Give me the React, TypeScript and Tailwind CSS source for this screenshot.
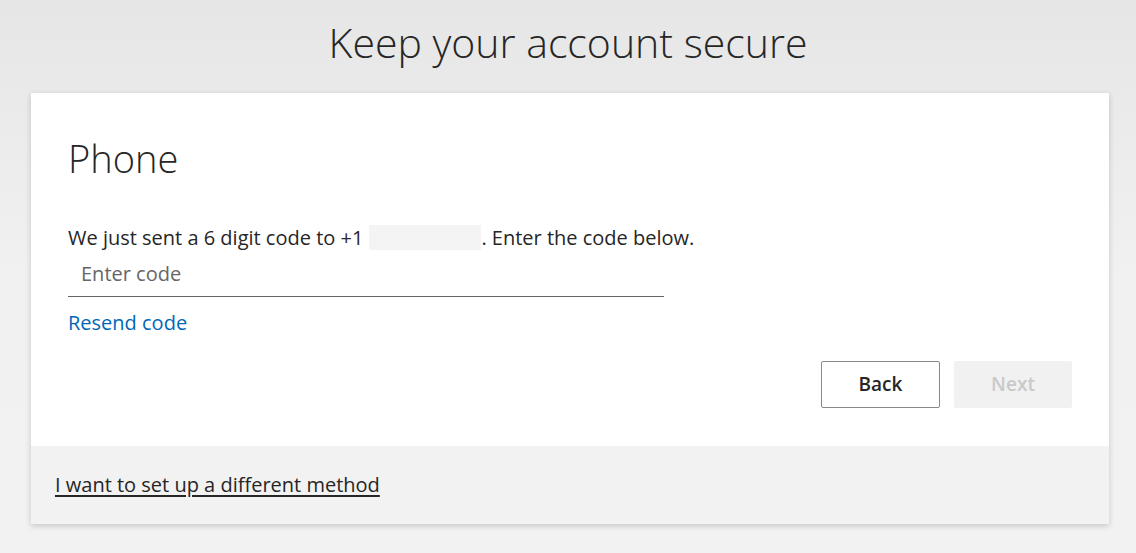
import React from 'react'

const font = { fontFamily: '"Open Sans", "Noto Sans", sans-serif' }

export default function App() {
  return (
    <div
      className="min-h-[553px] w-full bg-gradient-to-b from-[#e6e6e6] via-[#f1f1f1] to-[#f2f2f2] px-[31px] pt-[14px]"
      style={font}
    >
      <h1 className="text-center text-[41px] font-light leading-[56px] text-[#262626]">
        Keep your account secure
      </h1>

      <div className="mt-[23px] w-[1078px] bg-white shadow-[0_2px_6px_rgba(0,0,0,0.18)]">
        <div className="px-[37px] pt-[42px] pb-[38px]">
          <h2 className="text-[38px] font-light leading-[46px] text-[#262626]">Phone</h2>

          <p className="mt-[44px] flex items-center text-[20px] leading-[24px] text-[#262626]">
            We just sent a 6 digit code to +1
            <span className="mx-[6px] inline-block h-[25px] w-[112px] bg-[#f4f4f4]" />
            <span className="-ml-[6px]">. Enter the code below.</span>
          </p>

          <div className="mt-[12px] w-[596px] border-b border-[#666666] pb-[10px] pl-[13px] text-[20px] leading-[24px] text-[#666666]">
            Enter code
          </div>

          <a className="mt-[12px] block text-[20px] leading-[28px] text-[#0067b8]">Resend code</a>

          <div className="mt-[24px] flex justify-end gap-[14px]">
            <button className="h-[47px] w-[119px] rounded-[2px] border border-[#8a8a8a] bg-white text-[19px] font-semibold text-[#262626]">
              Back
            </button>
            <button className="h-[47px] w-[118px] rounded-[2px] bg-[#f1f1f1] text-[19px] font-semibold text-[#c9c9c9]">
              Next
            </button>
          </div>
        </div>

        <div className="flex h-[78px] items-center bg-[#f2f2f2] px-[24px]">
          <a className="text-[20px] leading-[24px] text-[#262626] underline underline-offset-[3px]">
            I want to set up a different method
          </a>
        </div>
      </div>
    </div>
  )
}
